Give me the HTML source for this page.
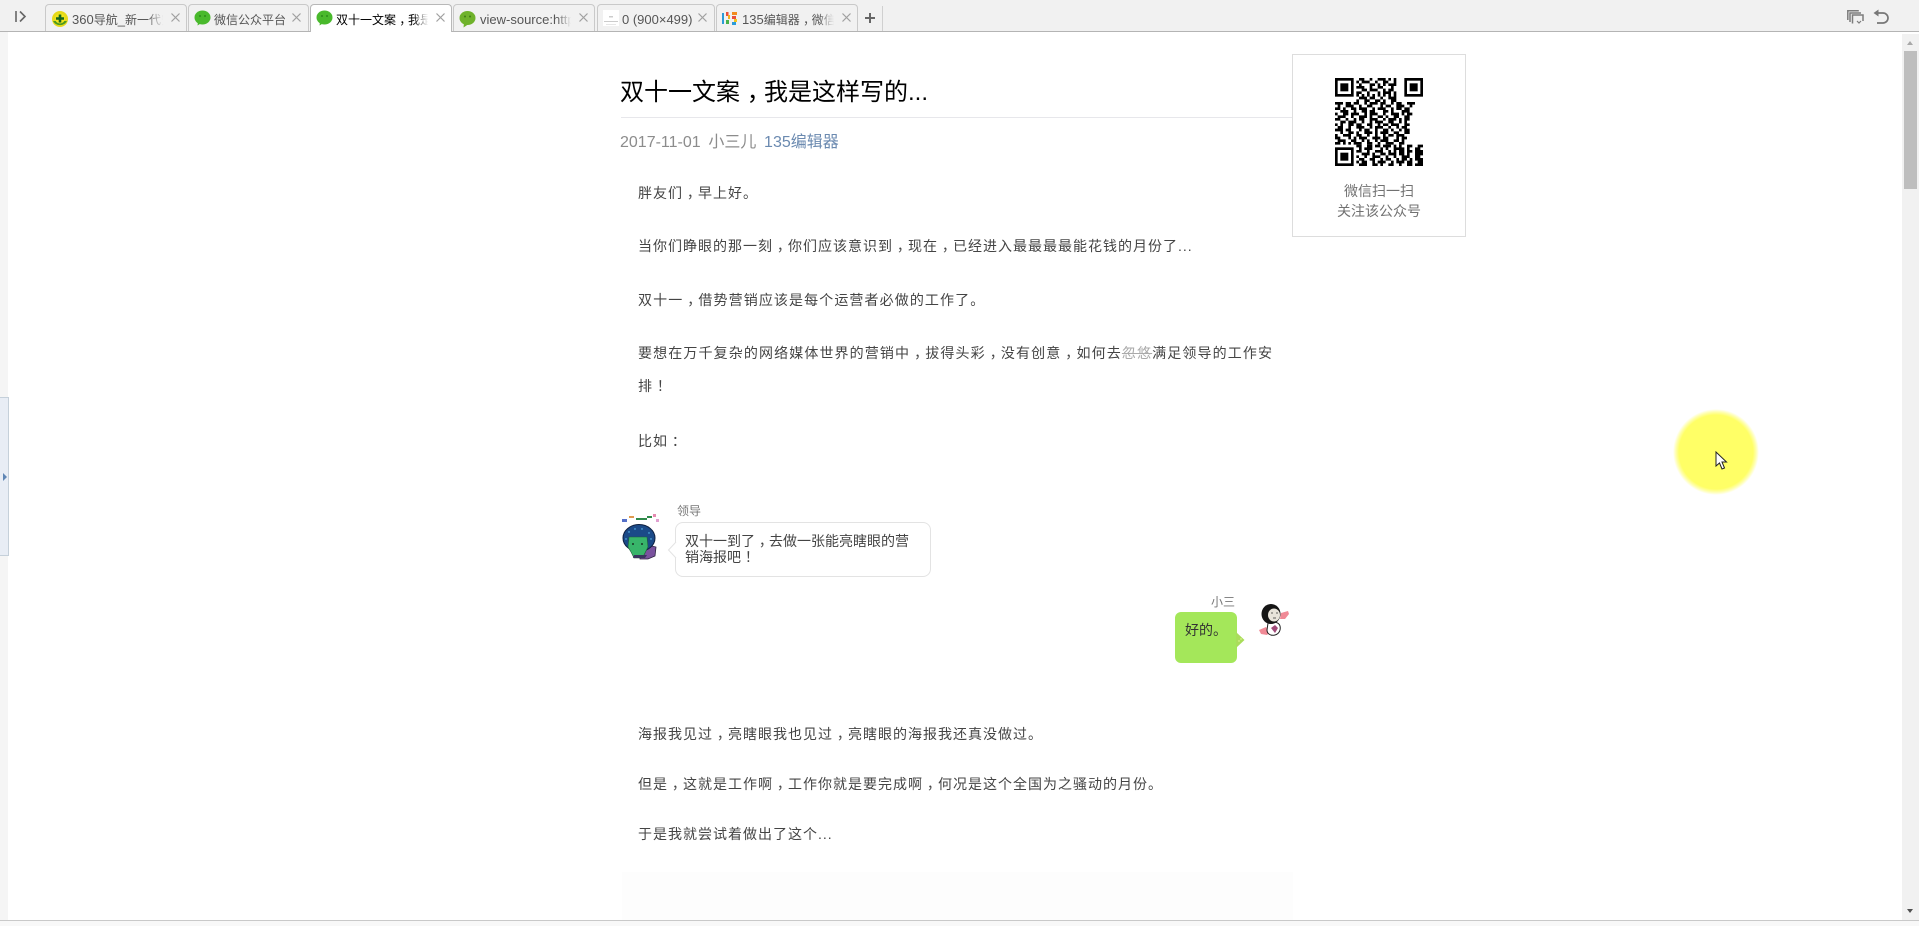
<!DOCTYPE html>
<html lang="zh-CN"><head><meta charset="utf-8"><title>双十一文案，我是这样写的...</title>
<style>
html,body{margin:0;padding:0;background:#fff;width:1919px;height:926px;overflow:hidden}
body{position:relative;font-family:"Liberation Sans","Noto Sans CJK SC",sans-serif}
.a,.l,.tab,svg.i{position:absolute}
.l{left:638px;font-size:14px;letter-spacing:1px;color:#444;line-height:20px;white-space:nowrap}
em.c{font-style:normal;position:relative;left:.28em}
#bar{position:absolute;left:0;top:0;width:1919px;height:31px;background:#f1f1f1;border-bottom:1px solid #b4b4b4}
.tab{top:4px;height:27px;box-sizing:border-box;border:1px solid #c9c9c9;border-bottom:0;border-radius:4px 4px 0 0;background:#f1f1f1;overflow:hidden}
.tab.on{background:#fff;height:28px;border-color:#b8b8b8;z-index:2}
.tab span{position:absolute;top:6px;left:26px;font-size:13px;line-height:17px;color:#555;white-space:nowrap;width:92px;overflow:hidden}
.tab span b{font-weight:normal;font-size:12px}
.tab.on span{color:#000}
.tab i{position:absolute;left:102px;top:2px;width:18px;height:24px;background:linear-gradient(90deg,rgba(241,241,241,0),#f1f1f1 85%)}
.tab.on i{background:linear-gradient(90deg,rgba(255,255,255,0),#fff 85%)}
.tab svg{position:absolute}
.tab .x{top:8px;width:9px;height:9px}
.m{margin-left:7.700px}
</style></head><body>
<div id="bar"></div>
<svg class="i" style="left:14px;top:10px" width="13" height="13" viewBox="0 0 13 13" fill="none" stroke="#666" stroke-width="1.6"><path d="M2 1v11"/><path d="M6 1.500l5 5-5 5"/></svg>

<div class="tab" style="left:45px;width:142px">
<svg style="left:6px;top:6px" width="16" height="16" viewBox="0 0 16 16"><circle cx="8" cy="8" r="8" fill="#e6d91a"/><path d="M1 10a8 8 0 0 0 14 0z" fill="#4c9a1e"/><circle cx="8" cy="7.500" r="5" fill="#f3e51c"/><path d="M6.700 3.500h2.600v2.700H12v2.600H9.300v2.700H6.700V8.800H4V6.200h2.700z" fill="#14641e"/></svg>
<span>360<b>导航</b>_<b>新一代安全上网</b></span><i></i>
<svg class="x" style="left:125px" viewBox="0 0 9 9" stroke="#a0a0a0" stroke-width="1.200"><path d="M.5.5l8 8M8.500.5l-8 8"/></svg></div>

<div class="tab" style="left:188px;width:121px">
<svg style="left:5px;top:5px" width="17" height="16" viewBox="0 0 17 16"><ellipse cx="8.500" cy="7.500" rx="8" ry="7" fill="#49b92c"/><path d="M4 12l-.5 3.500 4-2.500z" fill="#49b92c"/><circle cx="6" cy="6" r="1" fill="#2c8c19"/><circle cx="11" cy="6" r="1" fill="#2c8c19"/></svg>
<span style="left:25px;width:78px"><b>微信公众平台</b></span>
<svg class="x" style="left:103px" viewBox="0 0 9 9" stroke="#a0a0a0" stroke-width="1.200"><path d="M.5.5l8 8M8.500.5l-8 8"/></svg></div>

<div class="tab on" style="left:310px;width:142px">
<svg style="left:5px;top:5px" width="17" height="16" viewBox="0 0 17 16"><ellipse cx="8.500" cy="7.500" rx="8" ry="7" fill="#49b92c"/><path d="M4 12l-.5 3.500 4-2.500z" fill="#49b92c"/><circle cx="6" cy="6" r="1" fill="#2c8c19"/><circle cx="11" cy="6" r="1" fill="#2c8c19"/></svg>
<span style="left:25px"><b>双十一文案<em class="c">，</em>我是这样写的</b></span><i></i>
<svg class="x" style="left:125px" viewBox="0 0 9 9" stroke="#a0a0a0" stroke-width="1.200"><path d="M.5.5l8 8M8.500.5l-8 8"/></svg></div>

<div class="tab" style="left:453px;width:142px">
<svg style="left:5px;top:6px" width="17" height="17" viewBox="0 0 17 17"><ellipse cx="8.500" cy="7" rx="8" ry="7" fill="#6fb22b"/><path d="M5 12l-.5 4.500 4.500-3z" fill="#6fb22b"/><circle cx="6" cy="5.500" r="1" fill="#3f7d14"/><circle cx="11" cy="5.500" r="1" fill="#3f7d14"/></svg>
<span>view-source:https://mp</span><i></i>
<svg class="x" style="left:125px" viewBox="0 0 9 9" stroke="#a0a0a0" stroke-width="1.200"><path d="M.5.5l8 8M8.500.5l-8 8"/></svg></div>

<div class="tab" style="left:597px;width:118px">
<svg style="left:5px;top:5px" width="16" height="16" viewBox="0 0 16 16"><rect width="16" height="16" fill="#fff"/><path d="M6 6h4v1.500H6zM1 11h14v1H1z" fill="#ccc"/><path d="M3 14h10v.800H3z" fill="#ddd"/></svg>
<span style="left:24px;width:76px">0 (900×499)</span>
<svg class="x" style="left:100px" viewBox="0 0 9 9" stroke="#a0a0a0" stroke-width="1.200"><path d="M.5.5l8 8M8.500.5l-8 8"/></svg></div>

<div class="tab" style="left:716px;width:142px">
<svg style="left:5px;top:7px" width="16" height="13" viewBox="0 0 16 13"><rect x="0" y="1" width="2" height="11" fill="#2b9bd8"/><rect x="4" y="0" width="2.500" height="4" fill="#e9503c"/><rect x="6" y="3" width="2" height="4" fill="#f4b21c"/><rect x="4" y="8" width="3" height="4" fill="#49b24a"/><rect x="10" y="0" width="5" height="3" fill="#f28c1e"/><rect x="10" y="4" width="4" height="3" fill="#e9503c"/><rect x="12" y="7" width="3" height="3" fill="#f4c51c"/><rect x="10" y="10" width="4" height="3" fill="#2b9bd8"/></svg>
<span style="left:25px">135<b>编辑器<em class="c">，</em>微信编辑器</b></span><i></i>
<svg class="x" style="left:125px" viewBox="0 0 9 9" stroke="#a0a0a0" stroke-width="1.200"><path d="M.5.5l8 8M8.500.5l-8 8"/></svg></div>

<svg class="i" style="left:865px;top:13px" width="10" height="10" viewBox="0 0 10 10"><path d="M4 0h2v4h4v2H6v4H4V6H0V4h4z" fill="#666"/></svg>
<div class="a" style="left:882px;top:6px;width:1px;height:25px;background:#d0d0d0"></div>

<svg class="i" style="left:1847px;top:10px" width="17" height="15" viewBox="0 0 17 15" fill="none" stroke="#7c7c7c" stroke-width="1.500"><path d="M.8 10V.8h11"/><path d="M3 12V3h11"/><path d="M5.500 13.500v-8.500h10.500v6"/><path d="M10 11l2 2 2-2" stroke-width="1.200"/></svg>
<svg class="i" style="left:1873px;top:9px" width="16" height="16" viewBox="0 0 16 16" fill="none"><path d="M5 4h5a4.500 4.500 0 0 1 0 10H4" stroke="#777" stroke-width="1.700"/><path d="M5.500.5v7L.5 4z" fill="#777"/></svg>

<!-- left gutter -->
<div class="a" style="left:0;top:32px;width:8px;height:888px;background:#f5f5f5"></div>
<div class="a" style="left:0;top:397px;width:9px;height:159px;background:#e8edf5;border-top:1px solid #c5d0da;border-bottom:1px solid #c5d0da;border-right:1px solid #c5d0da;box-sizing:border-box"></div>
<div class="a" style="left:3px;top:473px;width:0;height:0;border-left:4px solid #5f86b5;border-top:4px solid transparent;border-bottom:4px solid transparent"></div>

<!-- scrollbar -->
<div class="a" style="left:1902px;top:34px;width:17px;height:886px;background:#f1f1f1"></div>
<div class="a" style="left:1904px;top:51px;width:13px;height:138px;background:#bebebe"></div>
<div class="a" style="left:1907px;top:41px;width:0;height:0;border-left:3.500px solid transparent;border-right:3.500px solid transparent;border-bottom:4px solid #a8a8a8"></div>
<div class="a" style="left:1907px;top:909px;width:0;height:0;border-left:3.500px solid transparent;border-right:3.500px solid transparent;border-top:4px solid #505050"></div>
<!-- bottom -->
<div class="a" style="left:622px;top:872px;width:671px;height:48px;background:#fdfdfd"></div>
<div class="a" style="left:0;top:920px;width:1919px;height:6px;background:#f8f8f8;border-top:1px solid #c9c9c9;box-sizing:border-box"></div>

<!-- article head -->
<div class="a" style="left:620px;top:75px;font-size:24px;line-height:36px;color:#000;white-space:nowrap">双十一文案<em class="c">，</em>我是这样写的...</div>
<div class="a" style="left:621px;top:117px;width:671px;height:1px;background:#e7e7eb"></div>
<div class="a" style="left:620px;top:132px;font-size:16px;line-height:22px;color:#8c8c8c;white-space:nowrap">2017-11-01<span class="m"></span>小三儿<span class="m"></span><span style="color:#6b8ab0">135编辑器</span></div>

<!-- QR -->
<div class="a" style="left:1292px;top:54px;width:174px;height:183px;border:1px solid #ddd;box-sizing:border-box;background:#fff"></div>
<svg class="i" style="left:1335px;top:78px" width="88" height="88" viewBox="0 0 33 33" fill="none">
<g stroke="#000" stroke-width="1">
<rect x=".5" y=".5" width="6" height="6"/><rect x="26.500" y=".5" width="6" height="6"/><rect x=".5" y="26.500" width="6" height="6"/>
<path d="M9 .5h2m2 0h1m2 0h3m1 0h1m1 0h1M8 1.500h1m1 0h3m2 0h1m2 0h2m2 0h1M9 2.500h1m3 0h2m1 0h1m1 0h1m1 0h3M8 3.500h3m2 0h1m2 0h2m3 0h1M10 4.500h2m1 0h3m2 0h1m1 0h2M8 5.500h2m2 0h1m3 0h1m1 0h3m1 0h1M8 6.500h1m1 0h1m1 0h1m1 0h1m1 0h1m1 0h1m1 0h1m1 0h1M9 7.500h3m1 0h2m2 0h1m2 0h3M8 8.500h1m2 0h2m2 0h2m1 0h1m2 0h2"/>
<path d="M0 9.500h3m1 0h2m1 0h2m2 0h1m1 0h3m1 0h2m2 0h1m1 0h2m2 0h3M1 10.500h1m2 0h3m2 0h1m2 0h2m3 0h1m1 0h2m2 0h3m2 0h1M0 11.500h2m1 0h1m2 0h2m1 0h3m2 0h1m1 0h3m2 0h1m1 0h2m1 0h2M2 12.500h3m2 0h1m2 0h2m1 0h2m3 0h2m1 0h1m3 0h3M0 13.500h1m2 0h2m1 0h3m2 0h1m1 0h3m2 0h1m2 0h3m1 0h1m1 0h2M1 14.500h3m2 0h1m2 0h3m1 0h1m2 0h2m1 0h1m2 0h2m2 0h2M0 15.500h2m2 0h1m2 0h1m1 0h2m2 0h3m2 0h1m1 0h3m1 0h1m1 0h2M2 16.500h2m1 0h3m2 0h1m2 0h1m1 0h3m2 0h2m2 0h1m1 0h1M0 17.500h1m1 0h1m2 0h2m1 0h2m2 0h2m2 0h1m1 0h2m1 0h3m2 0h2M1 18.500h2m2 0h1m2 0h3m2 0h1m1 0h3m2 0h1m2 0h1m1 0h2M0 19.500h3m1 0h2m3 0h1m1 0h2m2 0h1m2 0h2m1 0h1m2 0h1m1 0h2M2 20.500h1m2 0h2m1 0h1m2 0h3m1 0h1m1 0h3m2 0h2m2 0h2M0 21.500h1m2 0h3m2 0h2m2 0h1m2 0h1m2 0h1m1 0h2m1 0h3M0 22.500h2m3 0h1m1 0h1m1 0h3m2 0h3m1 0h2m3 0h1m1 0h2M1 23.500h3m2 0h2m2 0h1m1 0h1m2 0h1m1 0h3m2 0h2m1 0h1M0 24.500h2m1 0h1m1 0h1m1 0h3m2 0h2m2 0h1m2 0h3m2 0h2"/>
<path d="M8 25.500h2m2 0h2m1 0h2m1 0h3m1 0h1m1 0h1m2 0h2m2 0h3M9 26.500h1m1 0h3m3 0h1m1 0h1m2 0h4m1 0h1m2 0h2M8 27.500h2m2 0h1m2 0h3m2 0h1m1 0h1m1 0h2m1 0h2m1 0h3M10 28.500h3m1 0h1m2 0h2m1 0h3m1 0h2m1 0h1m2 0h3M8 29.500h1m2 0h1m2 0h3m2 0h1m2 0h1m2 0h3m2 0h2M9 30.500h2m2 0h2m2 0h1m1 0h2m2 0h1m1 0h2m1 0h1m1 0h3M8 31.500h1m1 0h2m2 0h1m1 0h3m2 0h1m1 0h3m1 0h2m2 0h2M9 32.500h3m2 0h2m1 0h1m2 0h2m2 0h1m2 0h2m1 0h3"/>
</g>
<g fill="#000"><rect x="2" y="2" width="3" height="3"/><rect x="28" y="2" width="3" height="3"/><rect x="2" y="28" width="3" height="3"/></g>
</svg>
<div class="a" style="left:1292px;top:181px;width:174px;text-align:center;font-size:14px;line-height:20px;color:#717171">微信扫一扫<br>关注该公众号</div>

<!-- body -->
<div class="l" style="top:183px">胖友们<em class="c">，</em>早上好。</div>
<div class="l" style="top:236px">当你们睁眼的那一刻<em class="c">，</em>你们应该意识到<em class="c">，</em>现在<em class="c">，</em>已经进入最最最最能花钱的月份了...</div>
<div class="l" style="top:290px;letter-spacing:1.100px">双十一<em class="c">，</em>借势营销应该是每个运营者必做的工作了。</div>
<div class="l" style="top:343px;letter-spacing:1.120px">要想在万千复杂的网络媒体世界的营销中<em class="c">，</em>拔得头彩<em class="c">，</em>没有创意<em class="c">，</em>如何去<s style="color:#aaa">忽悠</s>满足领导的工作安</div>
<div class="l" style="top:376px">排<em class="c">！</em></div>
<div class="l" style="top:431px">比如<em class="c">：</em></div>

<!-- chat left -->
<svg class="i" style="left:620px;top:511px" width="42" height="50" viewBox="0 0 42 50">
<rect x="2" y="8" width="5" height="3" fill="#5570c8"/><rect x="9" y="5" width="5" height="2" fill="#e09a50"/><rect x="16" y="7" width="11" height="2" fill="#2f8a4a"/><rect x="27" y="5" width="5" height="2" fill="#2f8a4a"/><rect x="33" y="3" width="3" height="3" fill="#e58ab0"/><rect x="36" y="8" width="3" height="3" fill="#e0a0d0"/>
<path d="M20 38l8-4 8 2-1 9-7 3h-8z" fill="#7a529e" stroke="#2c2440" stroke-width=".8"/>
<ellipse cx="19" cy="27" rx="16" ry="13.500" fill="#1b4a88" stroke="#0e2040" stroke-width="1"/>
<path d="M9 26h18l1 10-4 8-4 3h-6l-3-6-3-5z" fill="#38b56a" stroke="#1e5c38" stroke-width=".6"/>
<path d="M14 44l-1 3h12l2-3z" fill="#3a3560"/>
<circle cx="13" cy="33" r=".9" fill="#111"/><circle cx="22" cy="33" r=".9" fill="#111"/>
<circle cx="9" cy="21" r=".7" fill="#6cf"/><circle cx="15" cy="18" r=".7" fill="#6cf"/><circle cx="22" cy="18" r=".7" fill="#6cf"/><circle cx="29" cy="22" r=".7" fill="#6cf"/><circle cx="31" cy="28" r=".7" fill="#6cf"/><circle cx="6" cy="28" r=".7" fill="#6cf"/>
</svg>
<div class="a" style="left:677px;top:503px;font-size:12px;line-height:16px;color:#777">领导</div>
<div class="a" style="left:675px;top:522px;width:256px;height:55px;box-sizing:border-box;border:1px solid #e3e3e3;border-radius:8px;background:#fff;padding:10px 9px;font-size:14px;line-height:16px;color:#444">双十一到了<em class="c">，</em>去做一张能亮瞎眼的营<br>销海报吧<em class="c">！</em></div>
<svg class="i" style="left:667px;top:540px" width="10" height="20" viewBox="0 0 10 20"><path d="M9 2L1.500 10 9 18" fill="#fff" stroke="#e3e3e3"/><rect x="8.500" y="3" width="1.500" height="14" fill="#fff"/></svg>

<!-- chat right -->
<div class="a" style="left:1211px;top:594px;font-size:12px;line-height:16px;color:#777">小三</div>
<div class="a" style="left:1175px;top:612px;width:62px;height:51px;border-radius:6px;background:#a4e75a;box-sizing:border-box;padding:9px 10px;font-size:14px;line-height:18px;color:#333">好的。</div>
<svg class="i" style="left:1236px;top:631px" width="9" height="18" viewBox="0 0 9 18"><path d="M0 1l8.500 8L0 17z" fill="#a9dd5a"/><circle cx="3" cy="10" r=".7" fill="#eef7a0"/><circle cx="5" cy="8" r=".7" fill="#eef7a0"/></svg>
<svg class="i" style="left:1258px;top:603px" width="32" height="34" viewBox="0 0 32 34">
<path d="M23 10l7-2 1 3-4 5-5 0z" fill="#f08a96"/><path d="M1 27l7-3 4 5-3 3-6-1z" fill="#f08a96"/>
<path d="M10 20c5-2 11-1 12 3s-1 8-5 9-8-1-8-5z" fill="#fff" stroke="#222" stroke-width="1"/>
<path d="M13 25l4-3 3 3-3 5z" fill="#a04a78"/>
<ellipse cx="13" cy="11" rx="9.500" ry="10" fill="#151515"/>
<ellipse cx="16" cy="12" rx="6" ry="6.500" fill="#e8e4da"/>
<path d="M13 10h2M18 10h2M15 15h3" stroke="#333" stroke-width=".8"/>
</svg>

<div class="l" style="top:724px">海报我见过<em class="c">，</em>亮瞎眼我也见过<em class="c">，</em>亮瞎眼的海报我还真没做过。</div>
<div class="l" style="top:774px">但是<em class="c">，</em>这就是工作啊<em class="c">，</em>工作你就是要完成啊<em class="c">，</em>何况是这个全国为之骚动的月份。</div>
<div class="l" style="top:824px">于是我就尝试着做出了这个...</div>

<!-- highlight + cursor -->
<div class="a" style="left:1673px;top:409px;width:86px;height:86px;border-radius:50%;background:radial-gradient(circle closest-side,#ffff66 0,#ffff66 86%,rgba(255,255,102,.55) 93%,rgba(255,255,102,0) 100%)"></div>
<svg class="i" style="left:1715px;top:451px" width="14" height="20" viewBox="0 0 14 20"><path d="M1 1v14l3.500-3 2.500 6 2.500-1-2.500-6h4.500z" fill="#fff" stroke="#222" stroke-width="1"/></svg>
</body></html>
